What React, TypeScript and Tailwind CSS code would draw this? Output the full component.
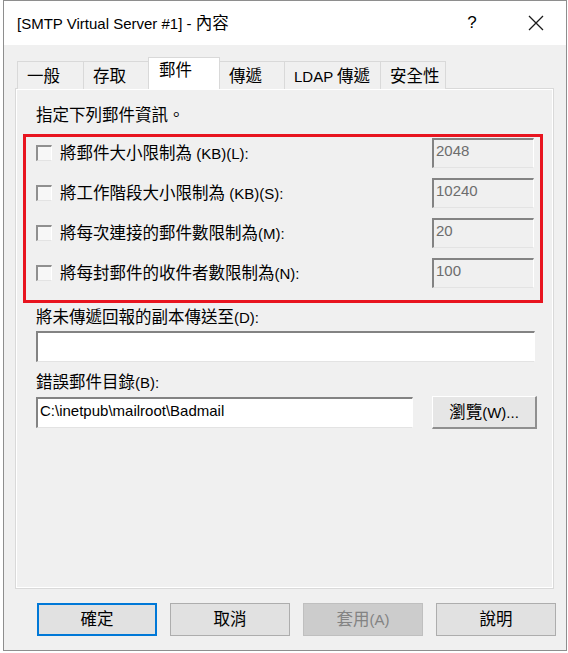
import React from "react";

const font = "font-['Liberation_Sans','Noto_Sans_CJK_TC',sans-serif]";

// CJK runs render a bit larger than the Latin text, like the Windows UI font
const cjk = /([\u2e80-\u9fff\uf900-\ufaff\uff00-\uffef\u3000-\u303f]+)/;
function T({ s }: { s: string }) {
  return (
    <>
      {s.split(cjk).map((p, i) =>
        cjk.test(p) ? (
          <span key={i} className="text-[16.5px]">{p}</span>
        ) : (
          <React.Fragment key={i}>{p}</React.Fragment>
        )
      )}
    </>
  );
}

const tabs = [
  { key: "一般", w: "w-[67px]" },
  { key: "存取", w: "w-[66px]" },
  { key: "郵件", w: "w-[72px]", active: true },
  { key: "傳遞", w: "w-[66px]" },
  { key: "LDAP 傳遞", w: "w-[97px]" },
  { key: "安全性", w: "w-[66px]" },
];

const limits = [
  { label: "將郵件大小限制為 (KB)(L):", value: "2048" },
  { label: "將工作階段大小限制為 (KB)(S):", value: "10240" },
  { label: "將每次連接的郵件數限制為(M):", value: "20" },
  { label: "將每封郵件的收件者數限制為(N):", value: "100" },
];

function Sunken({ className, children }: { className: string; children?: React.ReactNode }) {
  // classic inset edit box
  return (
    <div className={`border-t-2 border-l-2 border-b border-r border-t-[#838383] border-l-[#838383] border-b-[#e3e3e3] border-r-white ${className}`}>
      {children}
    </div>
  );
}

export default function App() {
  return (
    <div className={`w-[568px] h-[653px] bg-white ${font} text-black text-[15px]`}>
      <div className="ml-[3px] w-[564px] h-[651px] border border-[#8e8e8e] bg-[#f0f0f0] flex flex-col">
        {/* Title bar */}
        <div className="h-[44px] bg-white flex items-center pl-[13px] text-[15px]">
          <span className="flex-1"><T s="[SMTP Virtual Server #1] - 內容" /></span>
          <span className="w-[20px] text-center mr-[46px] text-[17px]">?</span>
          <svg width="16" height="16" viewBox="0 0 16 16" className="mr-[22px]">
            <path d="M1 1 L15 15 M15 1 L1 15" stroke="#1a1a1a" strokeWidth="1.3" fill="none" />
          </svg>
        </div>

        {/* Tabs */}
        <div className="mt-[12px] ml-[13px] flex items-end h-[32px] relative z-10">
          {tabs.map((t) =>
            t.active ? (
              <div key={t.key} className={`${t.w} h-[32px] bg-white border border-b-0 border-[#d9d9d9] -ml-px pl-[10px] pt-[2px] leading-[20px]`}>
                <T s={t.key} />
              </div>
            ) : (
              <div key={t.key} className={`${t.w} h-[28px] bg-[#f0f0f0] border border-b-0 border-[#d9d9d9] -ml-px first:ml-0 pl-[9px] pt-[4px] leading-[20px]`}>
                <T s={t.key} />
              </div>
            )
          )}
        </div>

        {/* Panel */}
        <div className="ml-[11px] w-[539px] h-[501px] -mt-px border border-[#d9d9d9]">
          <div className="h-full border border-white px-[6px]">
            <div className="ml-[13px] mt-[15px] leading-[20px]"><T s="指定下列郵件資訊。" /></div>

            <div className="mt-[8px] w-[520px] border-[3px] border-[#e8141f] pt-[1px] pb-[12px] flex flex-col gap-[10px]">
              {limits.map((l) => (
                <div key={l.label} className="h-[30px] flex items-center">
                  <div className="ml-[10px] w-[16px] h-[16px] border-t-2 border-l-2 border-b border-r border-t-[#8f8f8f] border-l-[#8f8f8f] border-b-[#e3e3e3] border-r-white bg-[#f7f7f7]" />
                  <span className="ml-[8px] flex-1 leading-[20px]"><T s={l.label} /></span>
                  <Sunken className="w-[102px] h-[30px] mr-[6px] bg-[#f0f0f0] pl-[2px] leading-[22px] text-[#6d6d6d]">
                    {l.value}
                  </Sunken>
                </div>
              ))}
            </div>

            <div className="ml-[13px] mt-[4px] leading-[20px]"><T s="將未傳遞回報的副本傳送至(D):" /></div>
            <Sunken className="ml-[13px] mt-[3px] w-[499px] h-[31px] bg-white" />

            <div className="ml-[13px] mt-[10px] leading-[20px]"><T s="錯誤郵件目錄(B):" /></div>
            <div className="ml-[13px] mt-[3px] flex items-center">
              <Sunken className="w-[377px] h-[31px] bg-white pl-[2px] leading-[24px]">
                C:\inetpub\mailroot\Badmail
              </Sunken>
              <button className="ml-[19px] w-[105px] h-[33px] bg-[#e6e6e6] border-t border-l border-b-2 border-r-2 border-t-white border-l-white border-b-[#8f8f8f] border-r-[#8f8f8f] leading-[20px]">
                <T s="瀏覽(W)..." />
              </button>
            </div>
          </div>
        </div>

        {/* Footer buttons */}
        <div className="mt-[14px] ml-[33px] flex gap-[13px]">
          <button className="w-[120px] h-[33px] bg-[#e1e1e1] border-2 border-[#0078d7]"><T s="確定" /></button>
          <button className="w-[120px] h-[33px] bg-[#e1e1e1] border border-[#adadad]"><T s="取消" /></button>
          <button className="w-[120px] h-[33px] bg-[#cccccc] border border-[#bfbfbf] text-[#838383]"><T s="套用(A)" /></button>
          <button className="w-[120px] h-[33px] bg-[#e1e1e1] border border-[#adadad]"><T s="說明" /></button>
        </div>
      </div>
    </div>
  );
}
